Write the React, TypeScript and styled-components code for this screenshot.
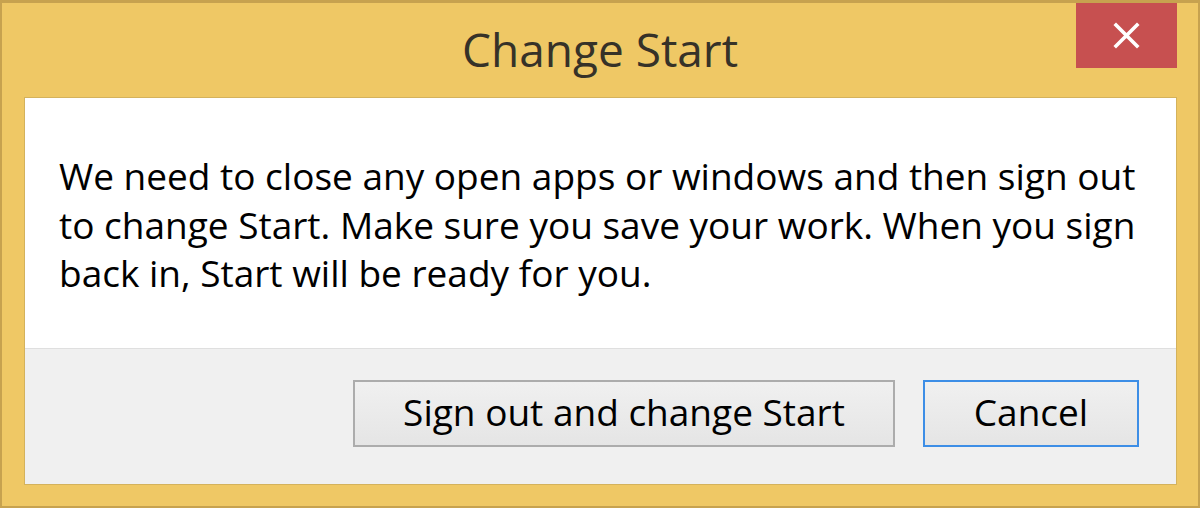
import React from "react";
import styled, { createGlobalStyle } from "styled-components";

const Global = createGlobalStyle`
  html, body { margin: 0; padding: 0; }
  body { width: 1200px; height: 508px; overflow: hidden; }
  * { box-sizing: border-box; }
`;

const Window = styled.div`
  width: 1200px;
  height: 508px;
  display: flex;
  flex-direction: column;
  background: #efc865;
  border: 2px solid #c7a24f;
  border-top-width: 3px;
  font-family: "Open Sans", "Noto Sans", sans-serif;
`;

const TitleBar = styled.div`
  height: 94px;
  display: grid;
  grid-template-columns: 1fr auto 1fr;
  align-items: start;
  padding: 0 21px;
`;

const Title = styled.div`
  grid-column: 2;
  margin-top: 18px;
  font-size: 46px;
  line-height: 56px;
  color: #363228;
`;

const CloseButton = styled.button`
  grid-column: 3;
  justify-self: end;
  width: 101px;
  height: 65px;
  border: none;
  padding: 0;
  background: #c75050;
  display: flex;
  align-items: center;
  justify-content: center;
`;

const Panel = styled.div`
  flex: 1;
  margin: 0 21px 21px 22px;
  border: 1px solid #d4b25c;
  display: flex;
  flex-direction: column;
`;

const Message = styled.div`
  height: 250px;
  background: #ffffff;
  padding: 54px 20px 0 34px;
  font-size: 37px;
  line-height: 48.5px;
  color: #000;
`;

const Footer = styled.div`
  flex: 1;
  background: #f0f0f0;
  border-top: 1px solid #dfdfdf;
  display: flex;
  justify-content: flex-end;
  align-items: flex-start;
  gap: 28px;
  padding: 31px 37px 0 0;
`;

const Button = styled.button<{ $primary?: boolean; $w: number }>`
  width: ${(p) => p.$w}px;
  height: 67px;
  border: 2px solid ${(p) => (p.$primary ? "#3d8ee6" : "#acacac")};
  background: linear-gradient(#f0f0f0, #e5e5e5);
  font-family: "Open Sans", "Noto Sans", sans-serif;
  font-size: 37px;
  color: #000;
  padding: 0 0 4px;
  display: flex;
  align-items: center;
  justify-content: center;
`;

export default function App() {
  return (
    <>
      <Global />
      <Window>
        <TitleBar>
          <Title>Change Start</Title>
          <CloseButton aria-label="Close">
            <svg width="27" height="27" viewBox="0 0 27 27">
              <path d="M3 3 L24 24 M24 3 L3 24" stroke="#fff" strokeWidth="3.6" strokeLinecap="square" />
            </svg>
          </CloseButton>
        </TitleBar>
        <Panel>
          <Message>
            We need to close any open apps or windows and then sign out to change Start. Make sure you save your work. When you sign back in, Start will be ready for you.
          </Message>
          <Footer>
            <Button $w={542}>Sign out and change Start</Button>
            <Button $w={216} $primary>Cancel</Button>
          </Footer>
        </Panel>
      </Window>
    </>
  );
}
